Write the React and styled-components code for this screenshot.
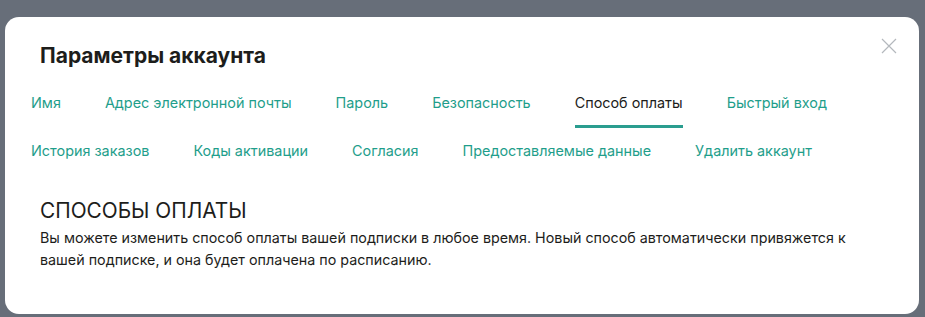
import React from 'react'
import styled, { createGlobalStyle } from 'styled-components'

const GlobalStyle = createGlobalStyle`
  html, body {
    margin: 0;
    padding: 0;
    background: #676e79;
    font-family: Inter, "Noto Sans", sans-serif;
  }
`

const firstRow = ['Имя', 'Адрес электронной почты', 'Пароль', 'Безопасность', 'Способ оплаты', 'Быстрый вход']
const secondRow = ['История заказов', 'Коды активации', 'Согласия', 'Предоставляемые данные', 'Удалить аккаунт']
const activeTab = 'Способ оплаты'

const TabRow = ({ items }) => (
  <Row>
    {items.map((item) => (
      <Tab key={item} $active={item === activeTab}>{item}</Tab>
    ))}
  </Row>
)

export default function App() {
  return (
    <Page>
      <GlobalStyle />
      <Modal>
        <Close aria-label='Закрыть'>
          <svg width='16' height='16' viewBox='0 0 16 16'>
            <path d='M1 1 L15 15 M15 1 L1 15' stroke='#b4b8bd' strokeWidth='1.2' fill='none' />
          </svg>
        </Close>
        <Title>Параметры аккаунта</Title>
        <Tabs>
          <TabRow items={firstRow} />
          <TabRow items={secondRow} />
        </Tabs>
        <Section>
          <Heading>СПОСОБЫ ОПЛАТЫ</Heading>
          <Text>
            Вы можете изменить способ оплаты вашей подписки в любое время. Новый способ автоматически привяжется к
            вашей подписке, и она будет оплачена по расписанию.
          </Text>
        </Section>
      </Modal>
    </Page>
  )
}

const Page = styled.div`
  width: 925px;
  height: 317px;
  padding: 17px 6px 0 5px;
  box-sizing: border-box;
  overflow: hidden;
`
const Modal = styled.div`
  position: relative;
  background: #ffffff;
  border-radius: 14px;
  height: 297px;
  box-sizing: border-box;
  padding: 25px 35px 0;
`
const Close = styled.button`
  position: absolute;
  top: 21px;
  right: 22px;
  border: 0;
  background: none;
  padding: 0;
  width: 16px;
  height: 16px;
  cursor: pointer;
`
const Title = styled.h1`
  margin: 0;
  font-size: 21px;
  line-height: 28px;
  font-weight: 700;
  color: #1d1d1b;
`
const Tabs = styled.div`
  margin: 14px 0 0 -9px;
`
const Row = styled.div`
  display: flex;
  gap: 44px;
  height: 48px;
`
const Tab = styled.div`
  box-sizing: border-box;
  height: 44px;
  padding-top: 9px;
  font-size: 14.4px;
  line-height: 20px;
  color: ${(p) => (p.$active ? '#1d1d1b' : '#1f9e8b')};
  border-bottom: 3px solid ${(p) => (p.$active ? '#2a9d8f' : 'transparent')};
  white-space: nowrap;
`
const Section = styled.div`
  margin-top: 18px;
`
const Heading = styled.h2`
  margin: 0;
  font-size: 20.8px;
  line-height: 26px;
  font-weight: 400;
  color: #1d1d1b;
`
const Text = styled.p`
  margin: 3px 0 0;
  font-size: 14.3px;
  line-height: 22px;
  color: #1d1d1b;
  max-width: 830px;
`
